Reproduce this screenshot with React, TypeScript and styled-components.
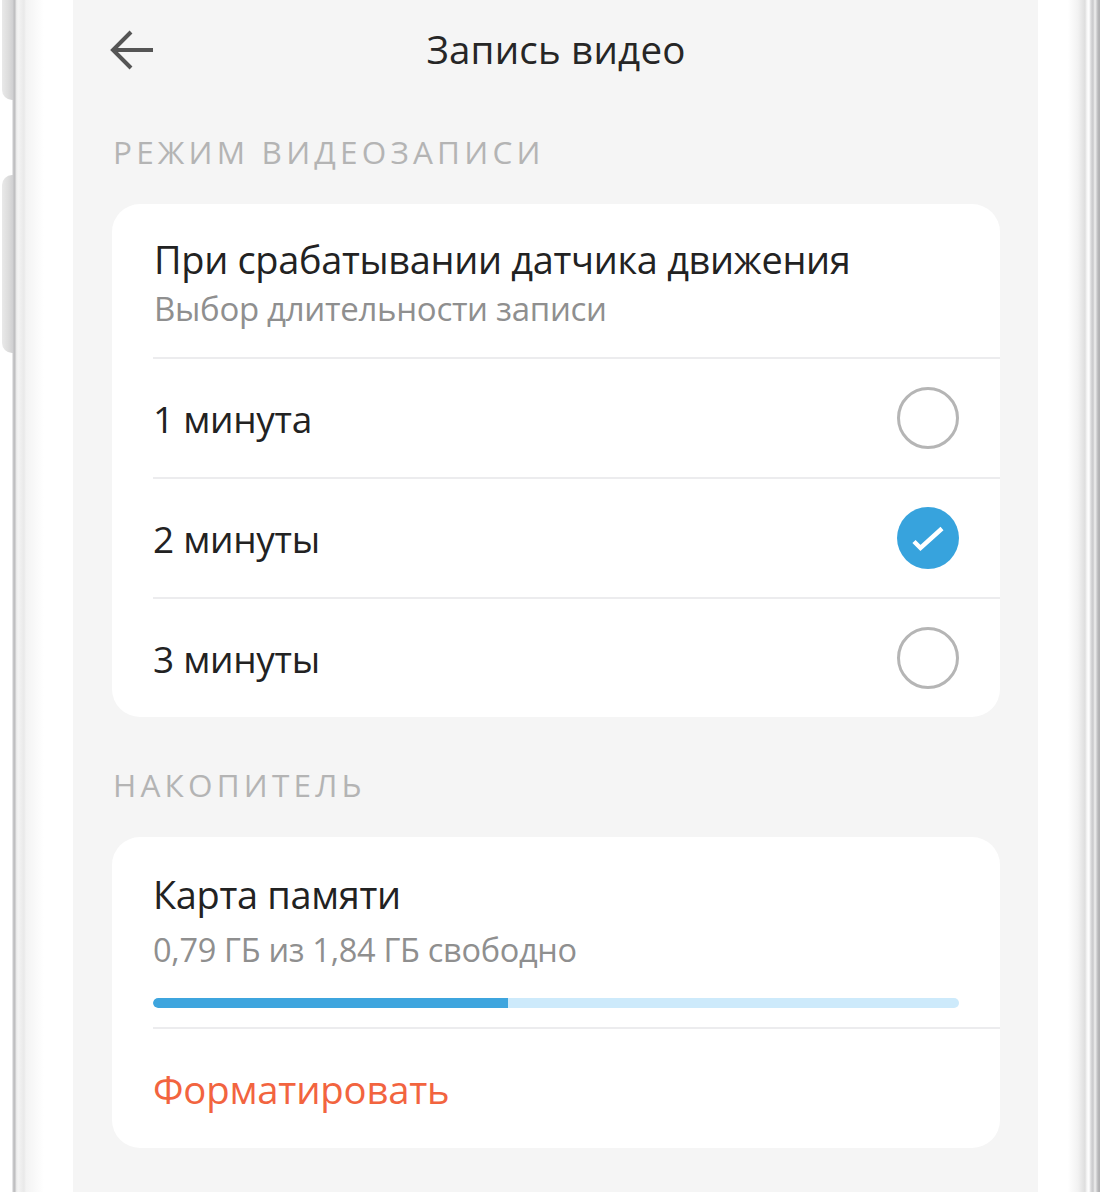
import React from 'react';
import styled, { createGlobalStyle } from 'styled-components';

interface DurationOption {
	label: string;
	checked: boolean;
}

const options: DurationOption[] = [
	{ label: '1 минута', checked: false },
	{ label: '2 минуты', checked: true },
	{ label: '3 минуты', checked: false },
];

const usedShare = 0.44;

const GlobalStyle = createGlobalStyle`
	html, body {
		margin: 0;
		padding: 0;
		background: #ffffff;
	}
	body {
		font-family: 'Open Sans', 'Noto Sans', sans-serif;
		-webkit-font-smoothing: antialiased;
	}
`;

const App: React.FC = () => (
	<>
		<GlobalStyle />
		<Device>
			<LeftBezel>
				<SideButton $top={-20} $height={120} />
				<SideButton $top={175} $height={178} />
			</LeftBezel>
			<Screen>
				<Header>
					<BackButton aria-label="Назад">
						<svg width="46" height="42" viewBox="0 0 46 42" fill="none">
							<path d="M44 21H4M22 3L4 21l18 18" stroke="#555" strokeWidth="4" />
						</svg>
					</BackButton>
					<Title>Запись видео</Title>
				</Header>

				<SectionLabel>Режим видеозаписи</SectionLabel>
				<Card>
					<CardHead>
						<ItemTitle>При срабатывании датчика движения</ItemTitle>
						<ItemHint>Выбор длительности записи</ItemHint>
					</CardHead>
					{options.map((opt) => (
						<OptionRow key={opt.label}>
							<OptionText>{opt.label}</OptionText>
							<Radio $checked={opt.checked}>
								{opt.checked && (
									<svg width="62" height="62" viewBox="0 0 62 62" fill="none">
										<path d="M17 34.5l6.5 6.5L45 21.5" stroke="#fff" strokeWidth="4.5" />
									</svg>
								)}
							</Radio>
						</OptionRow>
					))}
				</Card>

				<SectionLabel $top={46}>Накопитель</SectionLabel>
				<Card>
					<StorageHead>
						<ItemTitle>Карта памяти</ItemTitle>
						<ItemHint $gap={7} $size={32.5}>0,79 ГБ из 1,84 ГБ свободно</ItemHint>
						<Track>
							<Fill style={{ width: `${usedShare * 100}%` }} />
						</Track>
					</StorageHead>
					<ActionRow>Форматировать</ActionRow>
				</Card>
			</Screen>
			<RightBezel />
		</Device>
	</>
);

const Device = styled.div`
	display: flex;
	width: 1100px;
	height: 1192px;
	overflow: hidden;
`;

const LeftBezel = styled.div`
	position: relative;
	flex: 0 0 73px;
	background: linear-gradient(
		to right,
		#ffffff 0px,
		#ffffff 12px,
		#c9c9cb 13px,
		#bcbcbe 15px,
		#e6e6e6 16px,
		#f4f4f4 18px,
		#e9e9e9 24px,
		#f3f3f3 26px,
		#ffffff 44px,
		#ffffff 73px
	);
`;

const SideButton = styled.div<{ $top: number; $height: number }>`
	position: absolute;
	left: 2px;
	top: ${(p) => p.$top}px;
	width: 11px;
	height: ${(p) => p.$height}px;
	border-radius: 10px 0 0 10px;
	background: linear-gradient(to right, #e9e9e9, #dcdcdc 60%, #cfcfd1);
`;

const RightBezel = styled.div`
	flex: 0 0 62px;
	background: linear-gradient(
		to right,
		#ffffff 0px,
		#ffffff 30px,
		#f2f2f2 40px,
		#dedede 47px,
		#f7f7f7 49px,
		#ffffff 51px,
		#d8d8da 53px,
		#c9c9cb 55px,
		#f0f0f0 57px,
		#b9b9bb 60px,
		#aeaeb0 62px
	);
`;

const Screen = styled.div`
	flex: 1;
	background: #f5f5f5;
	padding: 0 38px 0 39px;
	display: flex;
	flex-direction: column;
`;

const Header = styled.div`
	position: relative;
	height: 100px;
	display: flex;
	align-items: center;
	justify-content: center;
`;

const BackButton = styled.div`
	position: absolute;
	left: -3px;
	top: 29px;
	display: flex;
`;

const Title = styled.div`
	font-size: 38.5px;
	color: #262626;
	letter-spacing: 0.2px;
	margin-top: -2px;
`;

const SectionLabel = styled.div<{ $top?: number }>`
	margin: ${(p) => p.$top ?? 30}px 0 0 1px;
	height: 74px;
	font-size: 31.5px;
	line-height: 44px;
	letter-spacing: 4.2px;
	text-transform: uppercase;
	color: #b4b4b4;
`;

const Card = styled.div`
	background: #ffffff;
	border-radius: 28px;
	overflow: hidden;
	display: flex;
	flex-direction: column;
`;

const CardHead = styled.div`
	padding: 30px 0 24px 0;
	margin-left: 42px;
`;

const ItemTitle = styled.div`
	font-size: 37.9px;
	line-height: 50px;
	color: #222222;
	letter-spacing: -0.3px;
`;

const ItemHint = styled.div<{ $gap?: number; $size?: number }>`
	margin-top: ${(p) => p.$gap ?? 1}px;
	font-size: ${(p) => p.$size ?? 33}px;
	line-height: 48px;
	color: #8f8f8f;
	letter-spacing: -0.3px;
`;

const OptionRow = styled.div`
	display: flex;
	align-items: center;
	justify-content: space-between;
	height: 118px;
	margin-left: 41px;
	padding-right: 41px;
	border-top: 2px solid #ececee;
`;

const OptionText = styled.div`
	font-size: 37px;
	color: #222222;
	letter-spacing: -0.3px;
`;

const Radio = styled.div<{ $checked: boolean }>`
	box-sizing: border-box;
	width: 62px;
	height: 62px;
	border-radius: 50%;
	display: flex;
	align-items: center;
	justify-content: center;
	border: ${(p) => (p.$checked ? 'none' : '3px solid #b5b5b5')};
	background: ${(p) => (p.$checked ? '#37a3dd' : 'transparent')};
`;

const StorageHead = styled.div`
	margin-left: 41px;
	padding: 32px 41px 19px 0;
	border-bottom: 2px solid #ececee;
`;

const Track = styled.div`
	margin-top: 24px;
	height: 10px;
	border-radius: 5px;
	background: #cdeafb;
	overflow: hidden;
`;

const Fill = styled.div`
	height: 100%;
	background: #3ea5de;
	border-radius: 5px 0 0 5px;
`;

const ActionRow = styled.div`
	height: 119px;
	display: flex;
	align-items: center;
	padding-left: 41px;
	font-size: 38.3px;
	color: #f2643f;
	letter-spacing: -0.2px;
`;

export default App;
